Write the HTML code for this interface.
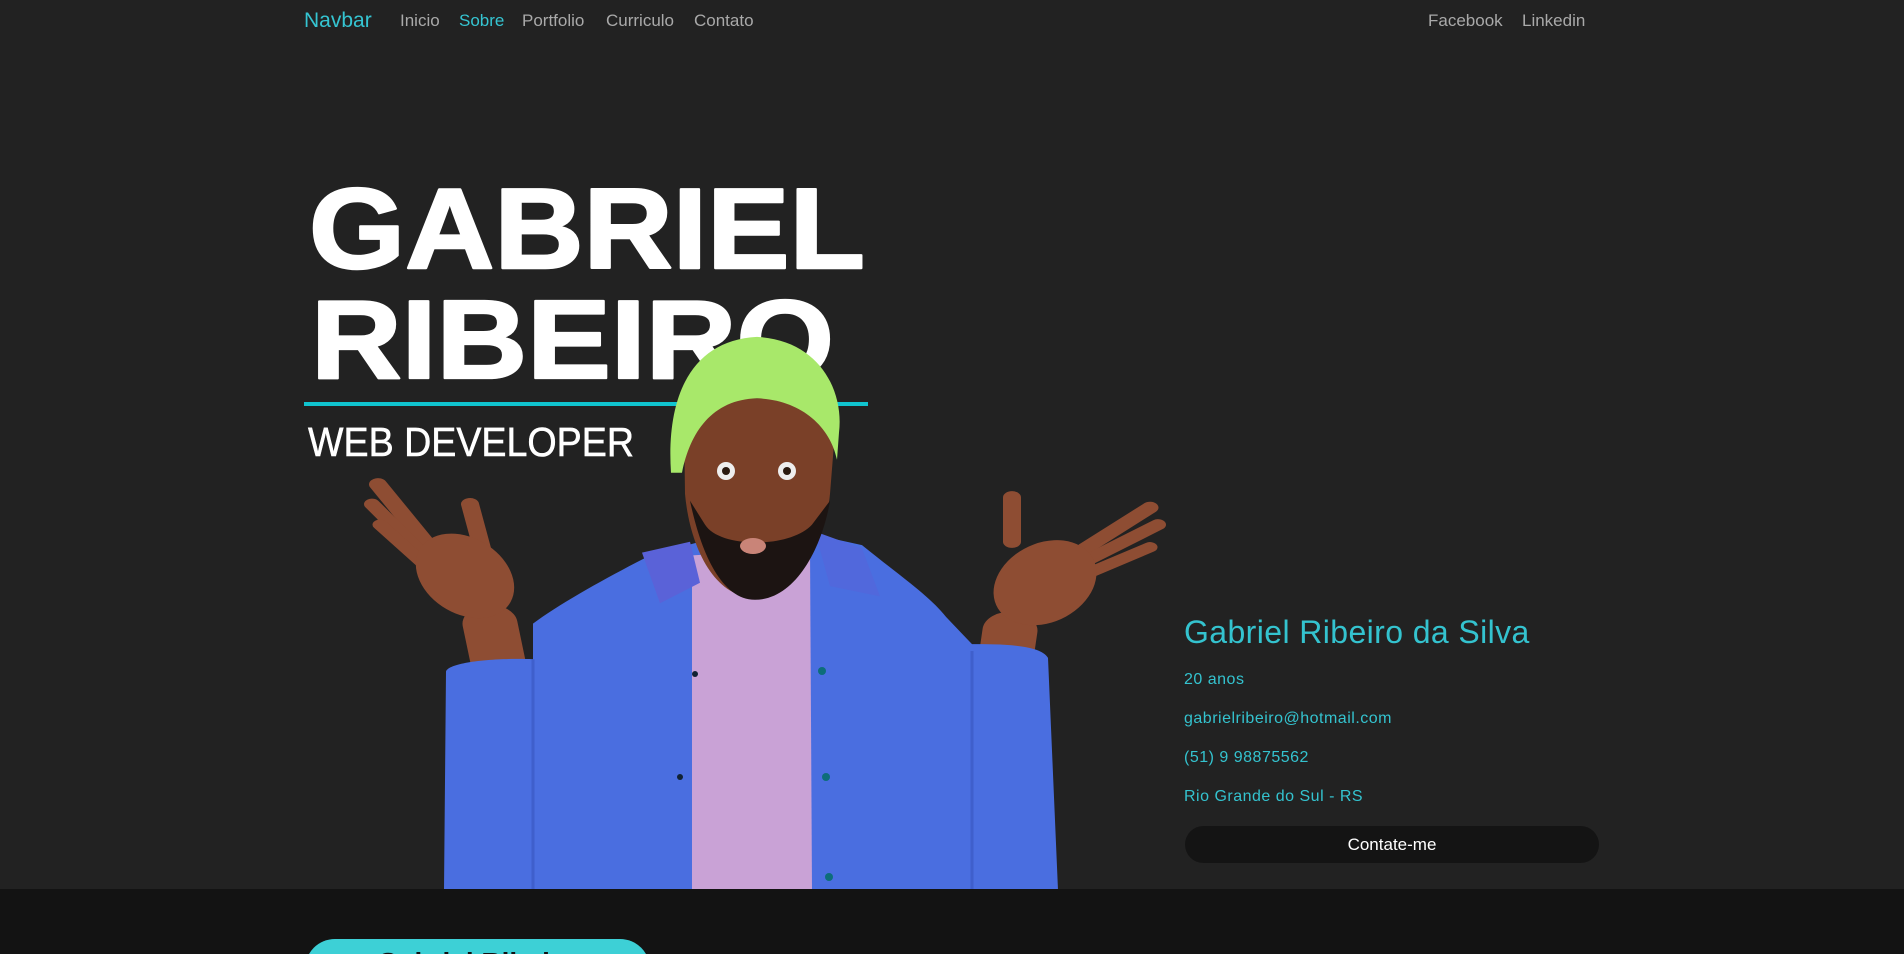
<!DOCTYPE html>
<html><head><meta charset="utf-8">
<style>
*{margin:0;padding:0;box-sizing:border-box}
html,body{width:1904px;height:954px;overflow:hidden;background:#222;font-family:"Liberation Sans",sans-serif;position:relative}
.nav{position:absolute;top:0;left:0;width:1904px;height:42px}
.nav span{position:absolute;top:11px;font-size:17px;color:#a9a9a9}
.brand{font-size:21px!important;top:9px!important;color:#35c5d2!important}
.info{position:absolute;left:1184px;color:#34c3cf;font-size:16px;letter-spacing:.5px}
.btn{position:absolute;left:1185px;top:826px;width:414px;height:37px;border-radius:19px;background:#141414;color:#fff;font-size:17px;text-align:center;line-height:37px}
.bottom{position:absolute;left:0;top:889px;width:1904px;height:65px;background:#131313;overflow:hidden}
.pill{position:absolute;left:305px;top:50px;width:345px;height:60px;border-radius:30px;background:#3dd0d6;color:#111;font-weight:bold;font-size:28px;text-align:center;padding-top:8px}
</style></head><body>
<div class="nav">
<span class="brand" style="left:304px">Navbar</span>
<span style="left:400px">Inicio</span>
<span style="left:459px;color:#35c5d2">Sobre</span>
<span style="left:522px">Portfolio</span>
<span style="left:606px">Curriculo</span>
<span style="left:694px">Contato</span>
<span style="left:1428px">Facebook</span>
<span style="left:1522px">Linkedin</span>
</div>
<svg width="1904" height="954" style="position:absolute;left:0;top:0">
<g transform="translate(309,268) scale(1,0.95)"><text x="0" y="0" textLength="556" lengthAdjust="spacingAndGlyphs" font-family="Liberation Sans" font-weight="bold" font-size="120" fill="#fff" stroke="#fff" stroke-width="2.5" stroke-linejoin="round">GABRIEL</text></g>
<g transform="translate(311,378) scale(1,0.94)"><text x="0" y="0" textLength="523" lengthAdjust="spacingAndGlyphs" font-family="Liberation Sans" font-weight="bold" font-size="118" fill="#fff" stroke="#fff" stroke-width="2.5" stroke-linejoin="round">RIBEIRO</text></g>
<rect x="304" y="402" width="564" height="4" fill="#10c4cf"/>
<g transform="translate(308,456) scale(1,1.08)"><text x="0" y="0" textLength="326" lengthAdjust="spacingAndGlyphs" font-family="Liberation Sans" font-size="38" fill="#fff" stroke="#fff" stroke-width=".5">WEB DEVELOPER</text></g>
<g transform="matrix(1 0 0 0.683 0 104.6)">
<g stroke="#8e4d33" stroke-linecap="round" fill="none">
<path d="M378,556 L425,640" stroke-width="18"/>
<path d="M372,585 L420,655" stroke-width="16"/>
<path d="M380,615 L422,670" stroke-width="15"/>
<path d="M470,585 L482,650" stroke-width="18"/>
<path d="M490,760 L500,830" stroke-width="55"/>
</g>
<ellipse cx="465" cy="690" rx="45" ry="65" fill="#8e4d33" transform="rotate(-25 465 690)"/>
<g stroke="#8e4d33" stroke-linecap="round" fill="none">
<path d="M1150,590 L1085,650" stroke-width="17"/>
<path d="M1158,615 L1090,665" stroke-width="16"/>
<path d="M1150,648 L1090,685" stroke-width="15"/>
<path d="M1012,575 L1012,640" stroke-width="18"/>
<path d="M1010,770 L1005,820" stroke-width="55"/>
</g>
<ellipse cx="1045" cy="700" rx="48" ry="65" fill="#8e4d33" transform="rotate(25 1045 700)"/>
<path d="M446,830 C450,815 500,810 533,812 L533,760 C560,730 610,690 650,660 L700,640 L800,625 L862,645 C900,690 930,720 946,750 L972,790 C1000,790 1040,790 1048,810 L1058,1150 L444,1150 Z" fill="#4a6ee0"/>
<path d="M533,812 L533,1150" stroke="#3f5fcc" stroke-width="3"/>
<path d="M972,800 L972,1150" stroke="#3f5fcc" stroke-width="3"/>
<path d="M692,660 L810,650 L812,1150 L692,1150 Z" fill="#c9a2d6"/>
<path d="M642,656 L690,640 L700,700 L660,730 Z" fill="#5a62d8"/>
<path d="M815,625 L862,650 L880,720 L830,705 Z" fill="#5168dc"/>
<path d="M684,460 C690,420 830,420 836,460 L830,570 C825,650 790,722 755,722 C715,722 690,650 685,570 Z" fill="#7a4028"/>
<path d="M690,580 C700,650 720,725 755,725 C795,725 822,650 830,580 L812,615 C790,650 720,650 705,615 Z" fill="#1c1412"/>
<path d="M671,539 C666,430 690,345 757,340 C820,345 844,420 839,480 L837,520 C830,470 800,432 757,430 C712,432 690,480 682,539 Z" fill="#a8e86a"/>
</g>
<circle cx="695" cy="674" r="3" fill="#123"/><circle cx="822" cy="671" r="4" fill="#0d6d7a"/>
<circle cx="826" cy="777" r="4" fill="#0d6d7a"/><circle cx="680" cy="777" r="3" fill="#123"/>
<circle cx="829" cy="877" r="4" fill="#0d6d7a"/>
<ellipse cx="753" cy="546" rx="13" ry="8" fill="#c98478"/>
<circle cx="726" cy="471" r="9" fill="#eee"/><circle cx="787" cy="471" r="9" fill="#eee"/>
<circle cx="726" cy="471" r="4" fill="#2a1a10"/><circle cx="787" cy="471" r="4" fill="#2a1a10"/>
</svg>
<div class="info" style="top:614px;font-size:32px;letter-spacing:.4px">Gabriel Ribeiro da Silva</div>
<div class="info" style="top:671px">20 anos</div>
<div class="info" style="top:710px">gabrielribeiro@hotmail.com</div>
<div class="info" style="top:749px">(51) 9 98875562</div>
<div class="info" style="top:788px">Rio Grande do Sul - RS</div>
<div class="btn">Contate-me</div>
<div class="bottom"><div class="pill">Gabriel Ribeiro</div></div>
</body></html>
